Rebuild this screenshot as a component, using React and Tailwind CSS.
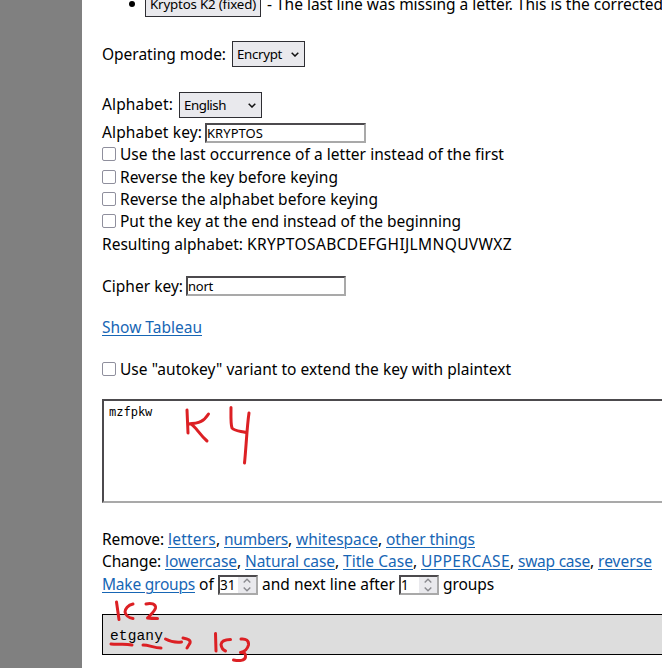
import { useLayoutEffect, useRef } from 'react';

// Text run whose letter spacing is adjusted so that it spans `width` pixels.
function Run({ width, className = '', children }) {
  const ref = useRef(null);
  useLayoutEffect(() => {
    const el = ref.current;
    el.style.letterSpacing = '0px';
    const natural = el.getBoundingClientRect().width;
    el.style.letterSpacing = `${(width - natural) / el.textContent.length}px`;
  }, [width, children]);
  return (
    <span ref={ref} className={`inline-block shrink-0 whitespace-pre ${className}`}>
      {children}
    </span>
  );
}

function Chevron() {
  return (
    <svg className="h-[5px] w-[8px]" viewBox="0 0 8 5" fill="none" stroke="#111" strokeWidth="1.5">
      <path d="M0.7 0.7 4 4 7.3 0.7" />
    </svg>
  );
}

function Select({ className, children }) {
  return (
    <div className={`flex h-[26px] shrink-0 items-center justify-between border border-[#2e2e33] bg-[#e9e9ed] pl-1 pr-[5px] text-[13.3px] ${className}`}>
      {children}
      <Chevron />
    </div>
  );
}

const inset = 'border-2 border-t-[#4c4a4d] border-l-[#4c4a4d] border-r-[#a9a9a9] border-b-[#a9a9a9] bg-white';

function Field({ className, children }) {
  return <div className={`flex h-5 shrink-0 items-center text-[13px] ${inset} ${className}`}>{children}</div>;
}

function NumberField({ value }) {
  return (
    <div className={`mt-px ml-1 flex h-5 w-10 shrink-0 items-center justify-between text-[13.5px] ${inset}`}>
      <span>{value}</span>
      <span className="flex h-full w-[18px] items-center justify-center bg-[#e9e9ed]">
        <svg className="h-[14px] w-[8px]" viewBox="0 0 8 14" fill="none" stroke="#8b8b90" strokeWidth="1.4">
          <path d="M0.7 4.5 4 1.2 7.3 4.5M0.7 9.5 4 12.8 7.3 9.5" />
        </svg>
      </span>
    </div>
  );
}

function Check({ width, className = '', children }) {
  return (
    <label className={`flex h-[22px] items-center ${className}`}>
      <span className="h-[14px] w-[14px] shrink-0 rounded-[2px] border border-[#8f8f9d] bg-white" />
      <Run width={width} className="ml-[4px]">{children}</Run>
    </label>
  );
}

function Link({ width, children }) {
  return (
    <Run width={width} className="text-[#1766b5] underline decoration-1 underline-offset-2">{children}</Run>
  );
}

function Links({ items }) {
  return items.map(([text, width], i) => (
    <span key={text} className="flex shrink-0">
      <Link width={width}>{text}</Link>
      {i < items.length - 1 && <span className="w-2 shrink-0">,</span>}
    </span>
  ));
}

export default function App() {
  return (
    <div className="relative flex h-[668px] w-[662px] overflow-hidden bg-white font-['Noto_Sans',sans-serif] text-[15.5px] leading-[22px] text-black">
      <div className="w-[82px] shrink-0 bg-[#808080]" />
      <main className="w-[580px] shrink-0 overflow-hidden pl-5">
        <div className="flex h-[17px] items-end overflow-hidden">
          <span className="mb-[10px] ml-[27px] h-[6px] w-[6px] shrink-0 rounded-full bg-black" />
          <div className="ml-[10px] flex h-[26px] w-[116px] shrink-0 items-center border border-[#2e2e33] bg-[#e9e9ed] pl-1 text-[13.3px]">
            <Run width={106}>Kryptos K2 (fixed)</Run>
          </div>
          <Run width={396} className="mb-[2px] ml-[6px]">- The last line was missing a letter. This is the corrected</Run>
        </div>

        <div className="mt-6 flex h-[26px] items-center">
          <Run width={124} className="pb-px">Operating mode:</Run>
          <Select className="ml-[6px] w-[73px]"><Run width={45}>Encrypt</Run></Select>
        </div>

        <div className="mt-[25px] flex h-[26px] items-center">
          <Run width={71} className="pb-[2px]">Alphabet:</Run>
          <Select className="ml-[6px] w-[83px]"><Run width={42}>English</Run></Select>
        </div>
        <div className="mt-[5px] flex h-5 items-center">
          <Run width={100} className="pb-[2px]">Alphabet key:</Run>
          <Field className="ml-[3px] w-[161px]"><Run width={56}>KRYPTOS</Run></Field>
        </div>
        <Check width={384}>Use the last occurrence of a letter instead of the first</Check>
        <Check width={218} className="mt-px">Reverse the key before keying</Check>
        <Check width={258}>Reverse the alphabet before keying</Check>
        <Check width={341}>Put the key at the end instead of the beginning</Check>
        <div className="flex h-[22px] items-center pt-[2px]">
          <Run width={141}>Resulting alphabet:</Run>
          <Run width={265} className="ml-[4px]">KRYPTOSABCDEFGHIJLMNQUVWXZ</Run>
        </div>

        <div className="mt-[22px] flex h-5 items-center">
          <Run width={81} className="pb-px">Cipher key:</Run>
          <Field className="ml-[3px] w-[160px]"><Run width={25}>nort</Run></Field>
        </div>

        <div className="mt-5 flex h-[22px] items-center"><Link width={100}>Show Tableau</Link></div>

        <Check width={391} className="mt-5">Use "autokey" variant to extend the key with plaintext</Check>

        <div className={`mt-[19px] h-[104px] w-[600px] pt-[3px] pl-[5px] font-['DejaVu_Sans_Mono',monospace] text-[12px] leading-[17px] ${inset}`}>
          mzfpkw
        </div>

        <div className="mt-[25px] flex h-[22px] items-center">
          <Run width={62} className="mr-[4px]">Remove:</Run>
          <Links items={[['letters', 48], ['numbers', 64], ['whitespace', 82], ['other things', 89]]} />
        </div>
        <div className="flex h-[22px] items-center">
          <Run width={59} className="mr-[4px]">Change:</Run>
          <Links items={[['lowercase', 72], ['Natural case', 90], ['Title Case', 70], ['UPPERCASE', 89], ['swap case', 72], ['reverse', 54]]} />
        </div>
        <div className="mt-px flex h-[22px] items-center">
          <Link width={93}>Make groups</Link>
          <Run width={15} className="ml-[4px]">of</Run>
          <NumberField value="31" />
          <Run width={133} className="ml-[4px]">and next line after</Run>
          <NumberField value="1" />
          <Run width={51} className="ml-[4px]">groups</Run>
        </div>

        <div className="mt-[19px] h-[41px] w-[600px] border border-black bg-[#ddd] pt-[10px] pl-[7px] font-['Liberation_Mono',monospace] text-[14.5px]">
          <Run width={53}>etgany</Run>
        </div>
      </main>

      {/* Handwritten notes over the page */}
      <svg className="absolute inset-0 h-[668px] w-[662px]" viewBox="0 0 662 668" fill="none" stroke="#dc2024" strokeWidth="3" strokeLinecap="round" strokeLinejoin="round">
        <path d="M187 410 188 433M208.500 414C204 421 200 423.500 188 424M191 424C196 427 199 434 207 441" />
        <path d="M231 407.500C231 414 230.500 424 232 428 234 431 240 431 246 432.500M249 413C247 426 246 449 244.500 463" />
        <path d="M116.500 602 119 619.500M133 604C128 605 125 609 125 612 126 616 129 618 133 618.500" />
        <path d="M146 604C151 602.500 156 604 155.500 608 154.500 612 150 615 147.500 618 151 618.500 154 618.500 157.500 618.500" />
        <path d="M111 644C118 645 124 643.500 132 645M143 645C149 645 154 648 161 648M165.500 639C171 642 177 642.500 181.500 642M183 638C188 639 191 640 190 643L187 648" />
        <path d="M215.500 633.500 216 651M230.500 639.500C225 639.500 221.500 641.500 221 644.500 221.500 648 223 650 225.500 651" />
        <path d="M241 639C246 638.500 249 640.500 248.500 645 247.500 649 245 651.500 240.500 652.500 244 652 246 653 245.500 657 245 661 239 661 233.500 660" />
      </svg>
    </div>
  );
}
